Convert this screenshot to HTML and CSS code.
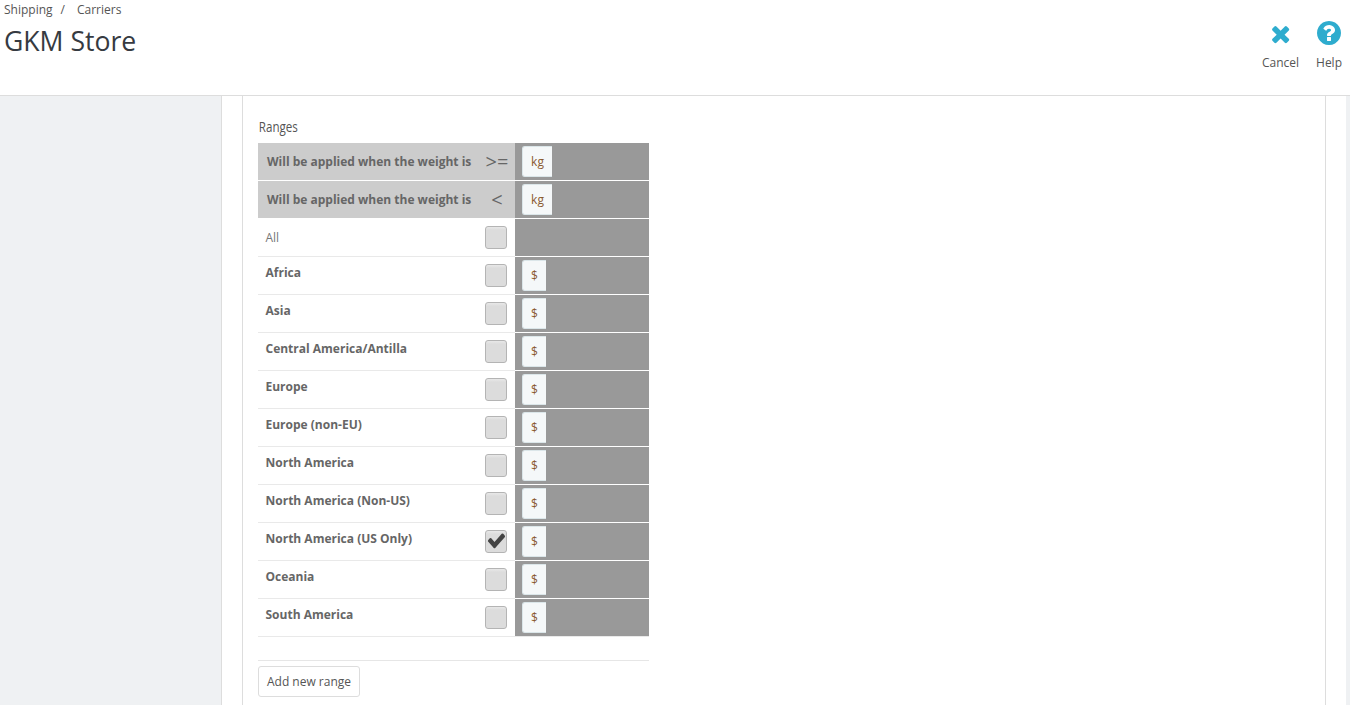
FILE: index.html
```html
<!DOCTYPE html>
<html lang="en">
<head>
<meta charset="utf-8">
<title>Carriers</title>
<link rel="stylesheet" href="styles.css">
</head>
<body>
<header class="page-head">
  <div class="head-left">
    <nav class="crumbs"><span>Shipping</span><span class="sep">/</span><span>Carriers</span></nav>
    <h1 class="title">GKM Store</h1>
  </div>
  <div class="toolbar">
    <a class="tool">
      <svg class="tool-icon" viewBox="20 15 1664 1664" width="24" height="24"><path class="icon-fill" d="M1490 1322q0 40-28 68l-136 136q-28 28-68 28t-68-28l-294-294-294 294q-28 28-68 28t-68-28l-136-136q-28-28-28-68t28-68l294-294-294-294q-28-28-28-68t28-68l136-136q28-28 68-28t68 28l294 294 294-294q28-28 68-28t68 28l136 136q28 28 28 68t-28 68l-294 294 294 294q28 28 28 68z"/></svg>
      <span>Cancel</span>
    </a>
    <a class="tool">
      <svg class="tool-icon" viewBox="128 128 1536 1536" width="24" height="24"><path class="icon-fill" d="M1024 1376v-192q0-14-9-23t-23-9h-192q-14 0-23 9t-9 23v192q0 14 9 23t23 9h192q14 0 23-9t9-23zm256-672q0-88-55.500-163t-138.500-116-170-41q-243 0-371 213-15 24 8 42l132 100q7 6 19 6 16 0 25-12 53-68 86-92 34-24 86-24 48 0 85.500 26t37.500 59q0 38-20 61t-68 45q-63 28-115.500 86.500t-52.500 125.500v36q0 14 9 23t23 9h192q14 0 23-9t9-23q0-19 21.500-49.500t54.500-49.500q32-18 49-28.500t46-35 44.500-48 28-60.500 12.500-81zm384 192q0 209-103 385.500t-279.500 279.500-385.500 103-385.500-103-279.500-279.500-103-385.500 103-385.500 279.500-279.500 385.500-103 385.500 103 279.500 279.500 103 385.500z"/></svg>
      <span>Help</span>
    </a>
  </div>
</header>
<div class="layout">
  <aside class="sidebar"></aside>
  <main class="content">
    <section class="panel">
      <h2 class="label">Ranges</h2>
      <table class="ranges">
        <tbody>
          <tr class="head-row">
            <td class="name"><div class="cell-inner"><b class="rule">Will be applied when the weight is</b><span class="op">&gt;=</span></div></td>
            <td class="vals"><span class="addon wide">kg</span></td>
          </tr>
          <tr class="head-row">
            <td class="name"><div class="cell-inner"><b class="rule">Will be applied when the weight is</b><span class="op">&lt;</span></div></td>
            <td class="vals"><span class="addon wide">kg</span></td>
          </tr>
          <tr>
            <td class="name"><div class="cell-inner"><span class="zone all">All</span><span class="check"></span></div></td>
            <td class="vals"></td>
          </tr>
          <tr>
            <td class="name"><div class="cell-inner"><b class="zone">Africa</b><span class="check"></span></div></td>
            <td class="vals"><span class="addon">$</span></td>
          </tr>
          <tr>
            <td class="name"><div class="cell-inner"><b class="zone">Asia</b><span class="check"></span></div></td>
            <td class="vals"><span class="addon">$</span></td>
          </tr>
          <tr>
            <td class="name"><div class="cell-inner"><b class="zone">Central America/Antilla</b><span class="check"></span></div></td>
            <td class="vals"><span class="addon">$</span></td>
          </tr>
          <tr>
            <td class="name"><div class="cell-inner"><b class="zone">Europe</b><span class="check"></span></div></td>
            <td class="vals"><span class="addon">$</span></td>
          </tr>
          <tr>
            <td class="name"><div class="cell-inner"><b class="zone">Europe (non-EU)</b><span class="check"></span></div></td>
            <td class="vals"><span class="addon">$</span></td>
          </tr>
          <tr>
            <td class="name"><div class="cell-inner"><b class="zone">North America</b><span class="check"></span></div></td>
            <td class="vals"><span class="addon">$</span></td>
          </tr>
          <tr>
            <td class="name"><div class="cell-inner"><b class="zone">North America (Non-US)</b><span class="check"></span></div></td>
            <td class="vals"><span class="addon">$</span></td>
          </tr>
          <tr>
            <td class="name"><div class="cell-inner"><b class="zone">North America (US Only)</b><span class="check"><svg viewBox="-59 216 1820 1600" preserveAspectRatio="none" width="20" height="20"><path class="tick" d="M1671 566q0-40-28-68l-136-136q-28-28-68-28t-68 28l-656 657-294-295q-28-28-68-28t-68 28l-136 136q-28 28-28 68t28 68l362 362 136 136q28 28 68 28t68-28l136-136 724-724q28-28 28-68z"/></svg></span></div></td>
            <td class="vals"><span class="addon">$</span></td>
          </tr>
          <tr>
            <td class="name"><div class="cell-inner"><b class="zone">Oceania</b><span class="check"></span></div></td>
            <td class="vals"><span class="addon">$</span></td>
          </tr>
          <tr>
            <td class="name"><div class="cell-inner"><b class="zone">South America</b><span class="check"></span></div></td>
            <td class="vals"><span class="addon">$</span></td>
          </tr>
        </tbody>
      </table>
      <div class="actions"><button class="btn" type="button">Add new range</button></div>
    </section>
  </main>
  <div class="edge"></div>
</div>
</body>
</html>
```
FILE: styles.css
```css
* { box-sizing: border-box; }
html, body { margin: 0; height: 705px; overflow: hidden; background: #fff; }
body { font-family: "Open Sans", "Liberation Sans", sans-serif; font-size: 12px; color: #666; }

.page-head { height: 96px; display: flex; justify-content: space-between; border-bottom: 1px solid #ddd; background: #fff; }
.head-left { padding: 1px 0 0 4px; }
.crumbs { font-size: 12px; line-height: 17px; color: #555; display: flex; }
.sep { margin: 0 12px 0 8px; }
.title { margin: 5px 0 0 0; font-size: 26.600px; line-height: 36px; font-weight: 400; color: #363a41; }
.toolbar { display: flex; gap: 17px; padding: 21px 8px 0 0; }
.tool { display: flex; flex-direction: column; align-items: center; font-size: 12px; line-height: 17px; color: #555; }
.tool-icon { margin-bottom: 9px; }
.icon-fill { fill: #2eacce; }

.layout { display: flex; height: 609px; }
.sidebar { width: 222px; background: #eff1f3; border-right: 1px solid #ddd; }
.content { width: 1124px; padding-left: 20px; }
.edge { flex: 1; background: #eff1f3; }
.panel { height: 100%; border-left: 1px solid #ddd; border-right: 1px solid #ddd; padding: 22px 0 0 15px; width: 1084px; }
.label { margin: 0; font-size: 14.500px; line-height: 18px; font-weight: 400; color: #555; height: 25px; transform: scaleX(.8); transform-origin: left top; padding-left: 1px; }

.ranges { border-collapse: separate; border-spacing: 0; width: 391px; table-layout: fixed; }
.ranges td { height: 38px; padding: 0; border-bottom: 1px solid #e9e9e9; }
.name { width: 257px; }
.cell-inner { display: flex; justify-content: space-between; align-items: center; padding: 0 8px 0 7.500px; height: 37px; }
.ranges .vals { background: #999; padding-left: 7px; border-bottom-color: #fff; }
.ranges tr:last-child .vals { border-bottom-color: #e9e9e9; }
.head-row .name { background: #ccc; border-bottom-color: #fff; }
.head-row .cell-inner { padding-left: 9px; padding-right: 6px; }
.rule { font-size: 12px; font-weight: 700; color: #666; }
.op { font-size: 20px; color: #666; width: 24px; text-align: center; line-height: 20px; }
.zone { font-size: 12px; font-weight: 700; color: #666; position: relative; top: -3px; }
.all { font-weight: 400; color: #777; top: 0; }
.check { width: 22px; height: 23px; flex: none; display: flex; align-items: center; justify-content: center; border: 1px solid #b4b4b4; border-radius: 3px; background: linear-gradient(#e8e8e8, #dcdcdc 15%, #dcdcdc); }
.tick { fill: #444; }

.addon { display: flex; align-items: center; justify-content: center; width: 24px; height: 31px; background: #f5f8f9; border: 1px solid #dbe6e9; border-right: 0; border-radius: 3px 0 0 3px; font-size: 12px; color: #8a5a30; }
.addon.wide { width: 30px; padding-bottom: 1px; }

.actions { width: 391px; margin-top: 23px; border-top: 1px solid #e6e6e6; padding-top: 5px; }
.btn { display: block; width: 102px; height: 31px; padding: 1px 0 0; font: 12px/1 "Open Sans", sans-serif; color: #555; background: #fff; border: 1px solid #ddd; border-radius: 3px; }
```
